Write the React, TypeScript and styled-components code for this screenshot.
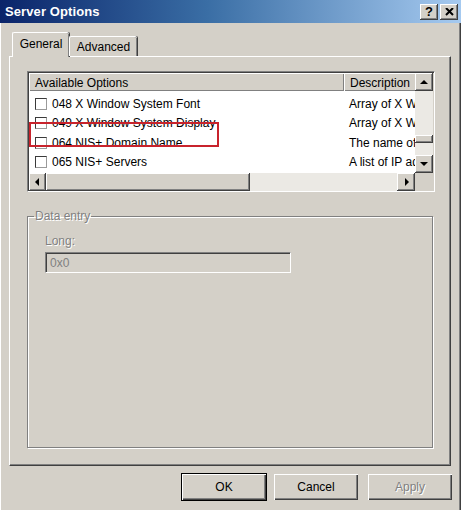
import React from 'react';
import styled, { createGlobalStyle } from 'styled-components';

/* --------------------------------- styles --------------------------------- */

const Global = createGlobalStyle`
  html, body {
    margin: 0;
    padding: 0;
    background: #ffffff;
  }
  body {
    font-family: 'Liberation Sans', Arial, sans-serif;
    font-size: 12px;
    color: #000;
  }
`;

const FACE = '#d4d0c8';
const SHADOW = '#808080';
const DARK = '#404040';

const Window = styled.div`
  width: 461px;
  height: 510px;
  background: ${FACE};
  box-shadow: inset -1px 0 0 ${DARK}, inset -2px 0 0 ${SHADOW}, inset 1px 0 0 #fff;
  overflow: hidden;
  display: flex;
  flex-direction: column;
`;

const TitleBar = styled.div`
  height: 23px;
  flex: none;
  display: flex;
  align-items: center;
  padding: 0 3px 0 5px;
  background: linear-gradient(to right, #0a246a 0%, #3a6ea5 45%, #a6caf0 100%);
`;

const TitleText = styled.div`
  flex: 1;
  color: #fff;
  font-weight: bold;
  font-size: 13px;
  letter-spacing: 0.1px;
`;

const CaptionButton = styled.div`
  width: 18px;
  height: 16px;
  margin-left: 2px;
  background: ${FACE};
  box-shadow: inset -1px -1px 0 ${DARK}, inset 1px 1px 0 #fff, inset -2px -2px 0 ${SHADOW};
  display: flex;
  align-items: center;
  justify-content: center;
  font-weight: bold;
  font-size: 13px;
  line-height: 1;
`;

const Body = styled.div`
  padding: 9px 9px 0 9px;
  display: flex;
  flex-direction: column;
`;

const TabStrip = styled.div`
  height: 24px;
  display: flex;
  align-items: flex-end;
  padding-left: 3px;
  position: relative;
  z-index: 1;
`;

const Tab = styled.div<{ $active?: boolean; $w: number }>`
  width: ${(p) => p.$w}px;
  height: ${(p) => (p.$active ? 25 : 20)}px;
  margin-bottom: ${(p) => (p.$active ? -1 : 0)}px;
  box-sizing: border-box;
  background: ${FACE};
  border-left: 1px solid #fff;
  border-top: 1px solid #fff;
  border-top-left-radius: 2px;
  border-top-right-radius: 2px;
  box-shadow: inset -1px 0 0 ${SHADOW}, 1px 0 0 ${DARK};
  display: flex;
  align-items: center;
  justify-content: center;
  padding-bottom: ${(p) => (p.$active ? 2 : 0)}px;
`;

const Panel = styled.div`
  width: 442px;
  height: 410px;
  box-sizing: border-box;
  border-left: 1px solid #fff;
  border-top: 1px solid #fff;
  border-right: 1px solid ${DARK};
  border-bottom: 1px solid ${DARK};
  box-shadow: inset -1px -1px 0 ${SHADOW};
  padding: 14px 0 0 17px;
  position: relative;
`;

const ListBox = styled.div`
  width: 408px;
  height: 121px;
  box-sizing: border-box;
  border-left: 1px solid ${SHADOW};
  border-top: 1px solid ${SHADOW};
  border-right: 1px solid #fff;
  border-bottom: 1px solid #fff;
  box-shadow: inset 1px 1px 0 ${DARK}, inset -1px -1px 0 ${FACE};
  padding: 1px;
  display: grid;
  grid-template-columns: 386px 18px;
  grid-template-rows: 100px 18px;
`;

const Viewport = styled.div`
  background: #fff;
  overflow: hidden;
`;

const HeaderRow = styled.div`
  display: flex;
  height: 18px;
`;

const HeaderCell = styled.div<{ $w: number }>`
  flex: none;
  width: ${(p) => p.$w}px;
  box-sizing: border-box;
  background: ${FACE};
  box-shadow: inset 1px 1px 0 #fff, inset -1px -1px 0 ${SHADOW};
  padding: 3px 0 0 6px;
  white-space: nowrap;
`;

const Rows = styled.div`
  padding-top: 3.5px;
`;

const Row = styled.div`
  display: flex;
  height: 19.3px;
  align-items: center;
  white-space: nowrap;
`;

const OptionCell = styled.div`
  width: 315px;
  flex: none;
  display: flex;
  align-items: center;
  padding-left: 6px;
  box-sizing: border-box;
`;

const DescCell = styled.div`
  flex: none;
  width: 120px;
  padding-left: 5px;
`;

const Check = styled.span`
  width: 12px;
  height: 12px;
  box-sizing: border-box;
  border: 1px solid #3a3a3a;
  border-right-color: #9a9a9a;
  border-bottom-color: #9a9a9a;
  background: #fff;
  margin-right: 5px;
  flex: none;
`;

const VScroll = styled.div`
  display: flex;
  flex-direction: column;
  background: #ebe9e4;
`;

const HScroll = styled.div`
  display: flex;
  background: #ebe9e4;
`;

const ArrowButton = styled.div<{ $w?: number }>`
  width: ${(p) => p.$w ?? 18}px;
  height: 18px;
  flex: none;
  box-sizing: border-box;
  background: ${FACE};
  box-shadow: inset -1px -1px 0 ${DARK}, inset 1px 1px 0 #fff, inset -2px -2px 0 ${SHADOW};
  display: flex;
  align-items: center;
  justify-content: center;
`;

const Thumb = styled.div<{ $w?: number; $h?: number }>`
  flex: none;
  width: ${(p) => (p.$w ? `${p.$w}px` : 'auto')};
  height: ${(p) => (p.$h ? `${p.$h}px` : 'auto')};
  background: ${FACE};
  box-shadow: inset -1px -1px 0 ${DARK}, inset 1px 1px 0 #fff, inset -2px -2px 0 ${SHADOW};
`;

const Track = styled.div<{ $size: number }>`
  flex: none;
  width: ${(p) => p.$size}px;
  height: ${(p) => p.$size}px;
`;

const Fill = styled.div`
  flex: 1;
`;

const Corner = styled.div`
  background: ${FACE};
`;

const Highlight = styled.div`
  position: absolute;
  left: 19px;
  top: 65px;
  width: 190px;
  height: 25px;
  box-sizing: border-box;
  border: 2px solid #c8232c;
  pointer-events: none;
`;

const Group = styled.fieldset`
  margin: 17px 0 0 0;
  padding: 11px 0 0 17px;
  width: 406px;
  height: 239px;
  box-sizing: border-box;
  min-width: 0;
  border: 1px solid ${SHADOW};
  box-shadow: inset 1px 1px 0 #fff, 1px 1px 0 #fff;
`;

const Legend = styled.legend`
  margin-left: -11px;
  padding: 0 1px;
  color: ${SHADOW};
  text-shadow: 1px 1px 0 #fff;
`;

const Label = styled.div`
  color: ${SHADOW};
  text-shadow: 1px 1px 0 #fff;
  margin-bottom: 4px;
`;

const Input = styled.div`
  width: 246px;
  height: 21px;
  box-sizing: border-box;
  border-left: 1px solid ${SHADOW};
  border-top: 1px solid ${SHADOW};
  border-right: 1px solid #fff;
  border-bottom: 1px solid #fff;
  box-shadow: inset 1px 1px 0 ${DARK}, inset -1px -1px 0 ${FACE};
  padding: 3px 0 0 4px;
  color: ${SHADOW};
`;

const ButtonRow = styled.div`
  display: flex;
  justify-content: flex-end;
  gap: 6px;
  margin-top: 7px;
  margin-right: -1px;
`;

const Button = styled.div<{ $default?: boolean; $disabled?: boolean }>`
  width: 86px;
  height: 28px;
  box-sizing: border-box;
  margin-left: ${(p) => (p.$disabled ? 2 : 0)}px;
  background: ${FACE};
  border: 1px solid ${(p) => (p.$default ? '#000' : FACE)};
  box-shadow: inset 1px 1px 0 #fff, inset -1px -1px 0 ${DARK}, inset -2px -2px 0 ${SHADOW};
  display: flex;
  align-items: center;
  justify-content: center;
  color: ${(p) => (p.$disabled ? SHADOW : '#000')};
  text-shadow: ${(p) => (p.$disabled ? '1px 1px 0 #fff' : 'none')};
`;

/* ---------------------------------- data ---------------------------------- */

const options = [
  { name: '048 X Window System Font', desc: 'Array of X Window System font servers' },
  { name: '049 X Window System Display', desc: 'Array of X Window System display managers' },
  { name: '064 NIS+ Domain Name', desc: 'The name of the client NIS+ domain' },
  { name: '065 NIS+ Servers', desc: 'A list of IP addresses' },
];

/* ---------------------------------- icons --------------------------------- */

const arrowPoints = {
  up: '4,2 0,6 8,6',
  down: '0,2 8,2 4,6',
  left: '5,0 5,8 1,4',
  right: '3,0 3,8 7,4',
};

const Arrow = ({ dir }: { dir: keyof typeof arrowPoints }) => (
  <svg width="8" height="8" viewBox="0 0 8 8">
    <polygon points={arrowPoints[dir]} fill="#000" />
  </svg>
);

/* -------------------------------- component ------------------------------- */

const App = () => {
  return (
    <>
      <Global />
      <Window>
        <TitleBar>
          <TitleText>Server Options</TitleText>
          <CaptionButton>?</CaptionButton>
          <CaptionButton>
            <svg width="9" height="8" viewBox="0 0 9 8">
              <path d="M1 0 L8 7 M8 0 L1 7" stroke="#000" strokeWidth="2" />
            </svg>
          </CaptionButton>
        </TitleBar>
        <Body>
          <TabStrip>
            <Tab $active $w={57}>General</Tab>
            <Tab $w={68}>Advanced</Tab>
          </TabStrip>
          <Panel>
            <ListBox>
              <Viewport>
                <HeaderRow>
                  <HeaderCell $w={315}>Available Options</HeaderCell>
                  <HeaderCell $w={120}>Description</HeaderCell>
                </HeaderRow>
                <Rows>
                  {options.map((o) => (
                    <Row key={o.name}>
                      <OptionCell>
                        <Check />
                        {o.name}
                      </OptionCell>
                      <DescCell>{o.desc}</DescCell>
                    </Row>
                  ))}
                </Rows>
              </Viewport>
              <VScroll>
                <ArrowButton>
                  <Arrow dir="up" />
                </ArrowButton>
                <Track $size={44} />
                <Thumb $h={8} />
                <Fill />
                <ArrowButton>
                  <Arrow dir="down" />
                </ArrowButton>
              </VScroll>
              <HScroll>
                <ArrowButton $w={17}>
                  <Arrow dir="left" />
                </ArrowButton>
                <Thumb $w={204} />
                <Fill />
                <ArrowButton>
                  <Arrow dir="right" />
                </ArrowButton>
              </HScroll>
              <Corner />
            </ListBox>
            <Highlight />
            <Group>
              <Legend>Data entry</Legend>
              <Label>Long:</Label>
              <Input>0x0</Input>
            </Group>
          </Panel>
          <ButtonRow>
            <Button $default>OK</Button>
            <Button>Cancel</Button>
            <Button $disabled>Apply</Button>
          </ButtonRow>
        </Body>
      </Window>
    </>
  );
};

export default App;
